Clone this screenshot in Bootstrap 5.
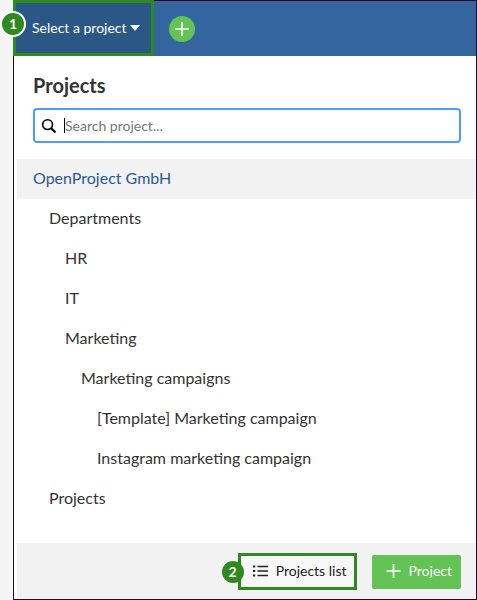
<!DOCTYPE html>
<html lang="en">
<head>
<meta charset="utf-8">
<meta name="viewport" content="width=device-width, initial-scale=1">
<title>Select a project</title>
<link href="https://cdn.jsdelivr.net/npm/bootstrap@5.3.0/dist/css/bootstrap.min.css" rel="stylesheet">
<style>
  body { font-family: Lato, sans-serif; font-size: 16px; line-height: 24px; color: #333; background: #f4f4f4; padding-left: 13px; }
  .window { border: 1px solid #32061e; background: #fff; }
  .topbar { background: #33669e; height: 55px; gap: 15px; }
  .picker { margin: -1px 0 0 -1px; height: 56px; width: 141px; padding: 0 0 0 16px; gap: 3px; border: 3px solid #2e8a1e; background: #2b5787; color: #fff; font-size: 14px; }
  .step { position: absolute; width: 22px; height: 22px; border-radius: 50%; background: #2e8a1e; color: #fff; font-size: 14px; line-height: 22px; font-weight: 700; text-align: center; }
  .step-one { left: -14px; top: 10px; box-shadow: 0 0 0 2px #fff; }
  .step-two { left: -19px; top: 5px; }
  .add { width: 26px; height: 26px; border-radius: 50%; background: #63c355; }
  .panel { padding-left: 3px; }
  .heading { font-size: 20px; line-height: 24px; font-weight: 700; }
  .head { padding: 17px 15px 16px 16px; gap: 11px; }
  .search { height: 35px; border: 2px solid #4a9ef5; border-radius: 4px; padding: 0 6px; }
  .cursor { width: 1px; height: 15px; background: #000; margin-left: 7px; }
  .search input { font-size: 14px; outline: 0; color: #333; }
  .search input::placeholder { color: #777; opacity: 1; }
  .tree a { display: block; line-height: 24px; padding: 7px 16px 9px; color: #333; text-decoration: none; }
  .tree a.current { background: #f2f2f2; color: #2b5a91; }
  .tree ul { padding-left: 16px; }
  .actions { background: #f2f2f2; padding: 10px 15px 9px; gap: 15px; }
  .list-btn { height: 37px; padding: 0 7px 2px 12px; gap: 8px; border: 3px solid #2e8a1e; background: #f8f8f8; color: #222; font-size: 14px; }
  .new-btn { height: 34px; padding: 0 9px 2px 14px; gap: 8px; border: 0; border-radius: 2px; background: #63c355; color: #fff; font-size: 14px; }
</style>
<script src="https://cdn.jsdelivr.net/npm/bootstrap@5.3.0/dist/js/bootstrap.bundle.min.js"></script>
</head>
<body class="min-vh-100 d-flex">
<div class="window flex-grow-1 d-flex flex-column">
  <header class="topbar d-flex align-items-center">
    <button type="button" class="picker position-relative d-flex align-items-center align-self-start text-nowrap" aria-expanded="true">
      <span class="step step-one">1</span>
      <span>Select a project</span>
      <svg width="10" height="6" viewBox="0 0 10 6" aria-hidden="true"><path d="M0 0h10L5 6z" fill="#fff"/></svg>
    </button>
    <button type="button" class="add border-0 p-0 d-flex align-items-center justify-content-center" aria-label="Add">
      <svg width="14" height="14" viewBox="0 0 14 14" aria-hidden="true"><path d="M7 0v14M0 7h14" stroke="#fff" stroke-width="1.7"/></svg>
    </button>
  </header>
  <main class="panel flex-grow-1 d-flex flex-column">
    <div class="head d-flex flex-column">
      <h1 class="heading m-0">Projects</h1>
      <label class="search d-flex align-items-center">
        <svg width="16" height="16" viewBox="0 0 16 16" fill="none" stroke="#000" aria-hidden="true"><circle cx="6.6" cy="6.6" r="4.9" stroke-width="1.6"/><path d="M10.2 10.2l4.3 4.3" stroke-width="2.1"/></svg>
        <span class="cursor"></span>
        <input type="text" class="border-0 p-0 flex-grow-1 bg-transparent" placeholder="Search project..." aria-label="Search project">
      </label>
    </div>
    <nav class="tree flex-grow-1" aria-label="Projects">
      <a class="current" href="#">OpenProject GmbH</a>
      <ul class="list-unstyled m-0">
        <li><a href="#">Departments</a>
          <ul class="list-unstyled m-0">
            <li><a href="#">HR</a></li>
            <li><a href="#">IT</a></li>
            <li><a href="#">Marketing</a>
              <ul class="list-unstyled m-0">
                <li><a href="#">Marketing campaigns</a>
                  <ul class="list-unstyled m-0">
                    <li><a href="#">[Template] Marketing campaign</a></li>
                    <li><a href="#">Instagram marketing campaign</a></li>
                  </ul>
                </li>
              </ul>
            </li>
          </ul>
        </li>
        <li><a href="#">Projects</a></li>
      </ul>
    </nav>
    <footer class="actions d-flex justify-content-end align-items-center">
      <button type="button" class="list-btn position-relative d-flex align-items-center text-nowrap">
        <span class="step step-two">2</span>
        <svg width="15" height="12" viewBox="0 0 15 12" aria-hidden="true"><path d="M0 1.5h2.2M0 6h2.2M0 10.5h2.2" stroke="#222" stroke-width="2.2"/><path d="M4.5 1.5H15M4.5 6H15M4.5 10.5H15" stroke="#222" stroke-width="1.6"/></svg>
        <span>Projects list</span>
      </button>
      <button type="button" class="new-btn d-flex align-items-center text-nowrap">
        <svg width="15" height="14" viewBox="0 0 15 14" aria-hidden="true"><path d="M7.5 0v14M.5 7h14" stroke="#fff" stroke-width="1.7"/></svg>
        <span>Project</span>
      </button>
    </footer>
  </main>
</div>
</body>
</html>
